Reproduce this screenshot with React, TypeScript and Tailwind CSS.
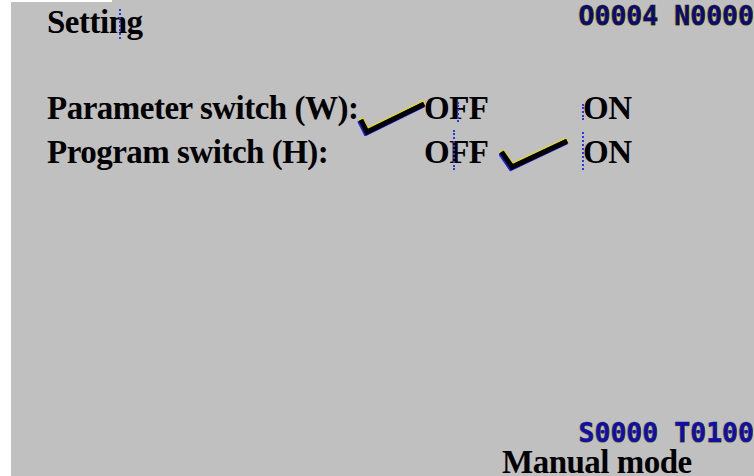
import React from "react";

const serif = { fontFamily: '"Liberation Serif", "Times New Roman", serif' };
const mono = { fontFamily: '"DejaVu Sans Mono", "Liberation Mono", monospace' };
const lcdShadow = {
  textShadow: "1px 0 0 #d8cc10, -1px 0 0 #c8c020, 0 1px 0 #b8b030",
  WebkitTextStroke: "0.6px currentColor",
} as React.CSSProperties;

function Check({ w, h, pts }: { w: number; h: number; pts: string }) {
  return (
    <svg width={w} height={h} viewBox={`0 0 ${w} ${h}`} className="block">
      <polyline points={pts} fill="none" stroke="#e8e000" strokeWidth="5.5" strokeLinecap="square" strokeLinejoin="miter" transform="translate(0,-1)" />
      <polyline points={pts} fill="none" stroke="#2020e0" strokeWidth="5.5" strokeLinecap="square" strokeLinejoin="miter" transform="translate(-1,1)" />
      <polyline points={pts} fill="none" stroke="#000000" strokeWidth="5" strokeLinecap="square" strokeLinejoin="miter" />
    </svg>
  );
}

function Dash({ className }: { className: string }) {
  return <div className={`absolute w-0 border-l-2 border-dotted border-[#2838e8] ${className}`} />;
}

export default function App() {
  return (
    <div className="relative flex h-[476px] w-[754px] overflow-hidden bg-white">
      <div className="w-[11px] shrink-0 bg-white" />
      <div className="relative flex flex-1 flex-col bg-[#c0c0c0] text-black">
        <div className="absolute left-0 top-0 h-[2px] w-[101px] bg-white" />
        {/* header */}
        <div className="flex h-[42px] items-start justify-between">
          <div className="ml-[36px] mt-[2px] whitespace-nowrap text-[33px] font-bold leading-[40px] tracking-[-0.5px]" style={serif}>
            Setting
          </div>
          <div className="whitespace-nowrap text-[26.5px] font-bold leading-[32px] text-[#0c0c70]" style={{ ...mono, ...lcdShadow }}>
            O0004 N0000
          </div>
        </div>
        {/* switches */}
        <div
          className="mt-[44px] grid grid-cols-[346px_67px_78px_81px_auto] whitespace-nowrap text-[33px] font-bold leading-[44px] tracking-[-0.5px]"
          style={serif}
        >
          <div className="pl-[36px]">Parameter switch (W):</div>
          <div className="relative">
            <div className="absolute left-[0px] top-[14px]">
              <Check w={70} h={36} pts="5,22 10,32 65,5" />
            </div>
          </div>
          <div>OFF</div>
          <div />
          <div>ON</div>

          <div className="pl-[36px]">Program switch (H):</div>
          <div />
          <div>OFF</div>
          <div className="relative">
            <div className="absolute left-[-3px] top-[8px]">
              <Check w={70} h={36} pts="4,16 13,29 66,4" />
            </div>
          </div>
          <div>ON</div>
        </div>
        <div className="flex-1" />
        {/* footer */}
        <div className="flex justify-end">
          <div className="whitespace-nowrap text-[26.5px] font-bold leading-[24px] text-[#1010a8]" style={{ ...mono, ...lcdShadow }}>
            S0000 T0100
          </div>
        </div>
        <div className="ml-[491px] mt-[3px] h-[28px] whitespace-nowrap text-[33px] font-bold leading-[28px] tracking-[-0.5px]" style={serif}>
          Manual mode
        </div>

        <Dash className="left-[108px] top-[9px] h-[30px]" />
        <Dash className="left-[446px] top-[102px] h-[20px]" />
        <Dash className="left-[442px] top-[130px] h-[40px]" />
        <Dash className="left-[571px] top-[104px] h-[16px]" />
        <Dash className="left-[571px] top-[132px] h-[38px]" />
      </div>
    </div>
  );
}
